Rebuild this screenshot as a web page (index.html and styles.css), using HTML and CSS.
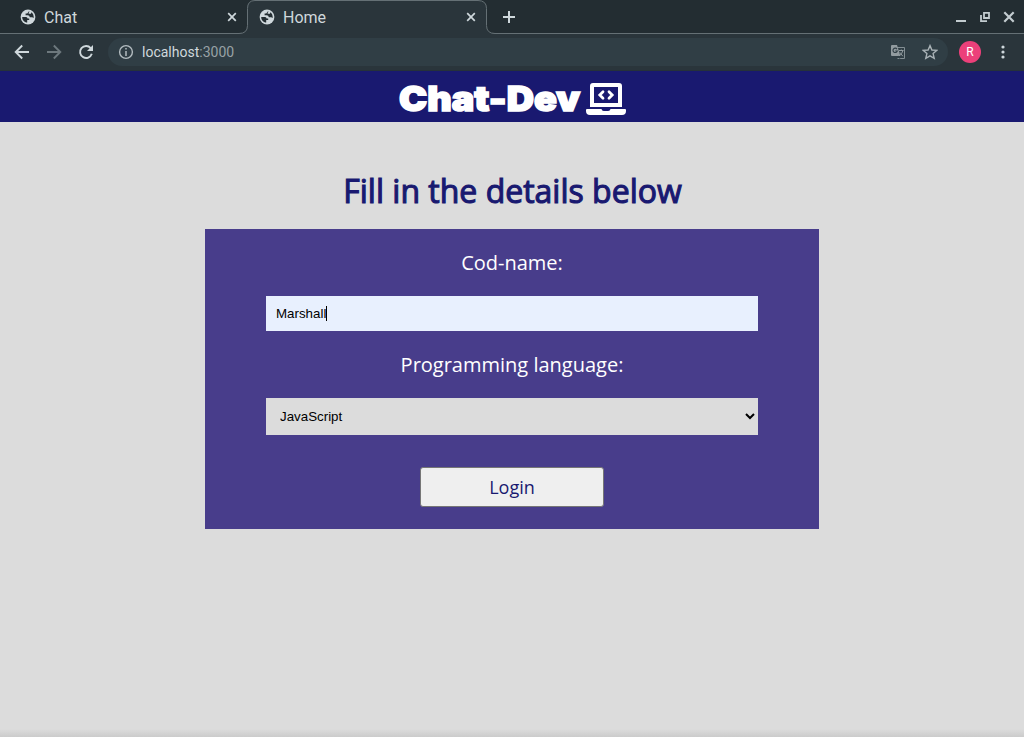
FILE: index.html
```html
<!DOCTYPE html>
<html lang="en">
<head>
<meta charset="utf-8">
<title>Home</title>
<link rel="stylesheet" href="styles.css">
</head>
<body>
<svg class="defs" width="0" height="0">
  <symbol id="globe" viewBox="0 0 16 16">
    <circle cx="8" cy="8" r="7.4" fill="#cfd8dc"/>
    <path d="M2.2 8H5.6Q7.4 8 7.6 9.4H9.2V11H7.2V13.6C4.3 13.3 2.1 11 2.2 8ZM8.8 2.4C8 2.8 8 4.2 7 4.6H5.6V6.2H7.8Q9.6 6.4 9.8 8.2H12.2L13.7 9C13.9 6.4 13 4.4 11.3 3.2L11 4.8H8.7V3.8L9.6 2.6Z" fill="#232d32"/>
  </symbol>
  <symbol id="close" viewBox="0 0 10 10"><path d="M1.2 1.2 8.8 8.8M8.8 1.2 1.2 8.8" stroke="#cfd8dc" stroke-width="1.7"/></symbol>
</svg>
<div class="tabstrip">
  <div class="tab first">
    <svg class="globe"><use href="#globe"/></svg><span class="title">Chat</span><svg class="close"><use href="#close"/></svg>
  </div>
  <div class="tab active">
    <svg class="outline" viewBox="0 0 256 34"><path d="M0 33.5Q8 33.5 8 25.5V8.5Q8 .5 16 .5H239Q247 .5 247 8.5V25.5Q247 33.5 256 33.5V35H0Z" fill="#2a353b"/><path d="M0 33.5Q8.5 33.5 8.5 25.5V8.5Q8.5 .5 16 .5H239Q247.5 .5 247.5 8.5V25.5Q247.5 33.5 256 33.5" fill="none" stroke="#657075"/></svg>
    <svg class="globe"><use href="#globe"/></svg><span class="title">Home</span><svg class="close"><use href="#close"/></svg>
  </div>
  <svg class="plus" viewBox="0 0 12 12"><path d="M6 0V12M0 6H12" stroke="#cfd8dc" stroke-width="2"/></svg>
  <svg class="window-controls" viewBox="0 0 60 14"><g fill="none" stroke="#c3ccd0"><path d="M0 11H10" stroke-width="2"/><path d="M28 2.9H33V8H28Z" stroke-width="1.8"/><path d="M25 5V11.2H31" stroke-width="1.8"/><path d="M48.3 2.3 57.7 11.7M57.7 2.3 48.3 11.7" stroke-width="2.2"/></g></svg>
</div>
<div class="toolbar">
  <svg class="nav" viewBox="0 0 16 16"><path d="M15 8H2M8.2 1.5 1.7 8 8.2 14.5" stroke="#cfd8dc"/></svg>
  <svg class="nav" viewBox="0 0 16 16"><path d="M1 8H14M7.8 1.5 14.3 8 7.8 14.5" stroke="#6d787d"/></svg>
  <svg class="nav" viewBox="0 0 16 16"><path d="M12.7 4.1A6 6 0 1 0 13.8 9.8" stroke="#cfd8dc"/><path d="M15 1V7H9Z" fill="#cfd8dc"/></svg>
  <div class="omnibox">
    <svg class="info" viewBox="0 0 16 16"><circle cx="8" cy="8" r="6.4" fill="none" stroke="#b3bcc0" stroke-width="1.4"/><path d="M8 4V5.5M8 7V12" stroke="#b3bcc0" stroke-width="1.5"/></svg>
    <span class="url">localhost<span class="port">:3000</span></span>
    <svg class="translate" viewBox="0 0 16 16"><path d="M7 3.5H14.5V14.5H7.5" fill="none" stroke="#838e93"/><path d="M2 1H7L10.4 12H2Q1 12 1 11V2Q1 1 2 1Z" fill="#929b9f"/><path d="M7 5.1A2.2 2.2 0 1 0 7.3 7H5.2M8 12 10 14.5" fill="none" stroke="#303e45" stroke-width="1.1"/><path d="M9 6.5H13.6M11.3 5.5V7M10 8.5 12.8 12.2M12.7 7Q11.9 9.8 10 11.3" fill="none" stroke="#929b9f"/></svg>
    <svg class="star" viewBox="0 0 16 16"><path d="M8 1.6 9.9 6 14.7 6.4 11.1 9.6 12.2 14.3 8 11.8 3.8 14.3 4.9 9.6 1.3 6.4 6.1 6Z" fill="none" stroke="#a9b2b6" stroke-width="1.4"/></svg>
  </div>
  <span class="avatar">R</span>
  <svg class="menu" viewBox="0 0 4 14"><g fill="#cfd8dc"><circle cx="2" cy="2" r="1.6"/><circle cx="2" cy="7" r="1.6"/><circle cx="2" cy="12" r="1.6"/></g></svg>
</div>
<header class="header">
  <svg class="wordmark" viewBox="0 0 182 39"><text x="0" y="27.5" textLength="181" lengthAdjust="spacingAndGlyphs">Chat-Dev</text></svg>
  <svg class="laptop" viewBox="0 0 640 512"><path fill="#fff" fill-rule="evenodd" d="M112 0H528A48 48 0 0 1 576 48V384H64V48A48 48 0 0 1 112 0ZM128 64V320H512V64Z"/><path fill="#fff" d="M16 416H249C252 435 266 448 286 448H354C374 448 388 435 391 416H624A16 16 0 0 1 640 432V448A64 64 0 0 1 576 512H64A64 64 0 0 1 0 448V432A16 16 0 0 1 16 416Z"/><path d="M272 141 221 192 272 243M368 141 419 192 368 243" fill="none" stroke="#fff" stroke-width="44" stroke-linecap="round"/></svg>
</header>
<main class="content">
  <h1 class="heading">Fill in the details below</h1>
  <form class="form">
    <label class="label" for="name">Cod-name:</label>
    <div class="field" id="name"><span>Marshall</span><i class="caret"></i></div>
    <label class="label second" for="lang">Programming language:</label>
    <select class="select" id="lang"><option>JavaScript</option></select>
    <button class="login" type="button">Login</button>
  </form>
</main>
</body>
</html>
```
FILE: styles.css
```css
* { box-sizing: border-box; }
body { margin: 0; height: 737px; overflow: hidden; display: flex; flex-direction: column; background: #dcdcdc; font-family: "Open Sans", sans-serif; }
svg { display: block; flex: none; }
.defs { position: absolute; }
.tabstrip { height: 34px; flex: none; display: flex; align-items: center; background: #232d32; box-shadow: inset 0 -1px #657075; font: 16px Roboto, sans-serif; color: #cfd8dc; }
.tab { position: relative; height: 34px; width: 240px; display: flex; align-items: center; padding: 0 11px 0 12px; }
.tab.first { width: 247px; padding-left: 20px; padding-right: 10px; }
.outline { position: absolute; left: -8px; top: 0; width: 256px; height: 34px; }
.globe { position: relative; width: 16px; height: 16px; }
.title { position: relative; margin-left: 8px; flex: 1; line-height: 34px; padding-top: 2px; }
.close { position: relative; width: 10px; height: 10px; }
.plus { width: 12px; height: 12px; margin-left: 16px; }
.window-controls { width: 60px; height: 14px; margin-left: auto; margin-right: 8px; }
.toolbar { height: 37px; flex: none; display: flex; align-items: center; padding: 0 19px 0 14px; background: #2a353b; border-bottom: 1px solid #26313a; }
.nav { width: 16px; height: 16px; margin-right: 16px; fill: none; stroke-width: 1.9; }
.nav:nth-child(3) { margin-right: 14px; }
.omnibox { flex: none; width: 840px; height: 28px; border-radius: 14px; background: #303e45; display: flex; align-items: center; padding: 0 10px; font: 14px Roboto, sans-serif; color: #cfd8dc; }
.info { width: 16px; height: 16px; margin-right: 8px; }
.port { color: #98a2a6; }
.url { flex: 1; }
.translate { width: 16px; height: 16px; margin-right: 16px; }
.star { width: 16px; height: 16px; }
.avatar { flex: none; width: 22px; height: 22px; margin-left: 11px; border-radius: 50%; background: #ec407a; color: #fff; font: 12px/22px Roboto, sans-serif; text-align: center; }
.menu { width: 4px; height: 14px; margin-left: 20px; }
.header { height: 51px; flex: none; display: flex; justify-content: center; background: #191970; padding-top: 12px; }
.wordmark { width: 182px; height: 39px; font: 900 34px Inter, sans-serif; fill: #fff; stroke: #fff; stroke-width: 1.6; overflow: visible; }
.laptop { width: 40px; height: 32px; margin-left: 5px; }
.content { flex: 1; display: flex; flex-direction: column; align-items: center; background: linear-gradient(transparent calc(100% - 8px), #cbcbcb); }
.heading { margin: 45px 0 14px 1px; font-size: 32px; line-height: 48px; font-weight: 400; color: #191970; -webkit-text-stroke: 1.1px #191970; }
.form { width: 614px; height: 300px; padding: 17px 61px 0; display: flex; flex-direction: column; align-items: center; background: #483d8b; }
.label { height: 34px; line-height: 34px; font-size: 20px; color: #fff; }
.field { width: 492px; height: 35px; margin-top: 16px; padding-left: 10px; display: flex; align-items: center; background: #e8f0fe; font: 13.333px "Liberation Sans", sans-serif; color: #000; }
.caret { width: 1px; height: 15px; background: #000; }
.second { margin-top: 17px; }
.select { width: 492px; height: 37px; margin-top: 16px; padding: 0 0 0 10px; border: 0; border-radius: 0; background: #dcdcdc; color: #000; font: 13.333px "Liberation Sans", sans-serif; }
.login { width: 184px; height: 40px; margin-top: 32px; padding: 0; border: 1px solid #767676; border-radius: 3px; background: #efefef; color: #191970; font: 18px "Open Sans", sans-serif; }
```
